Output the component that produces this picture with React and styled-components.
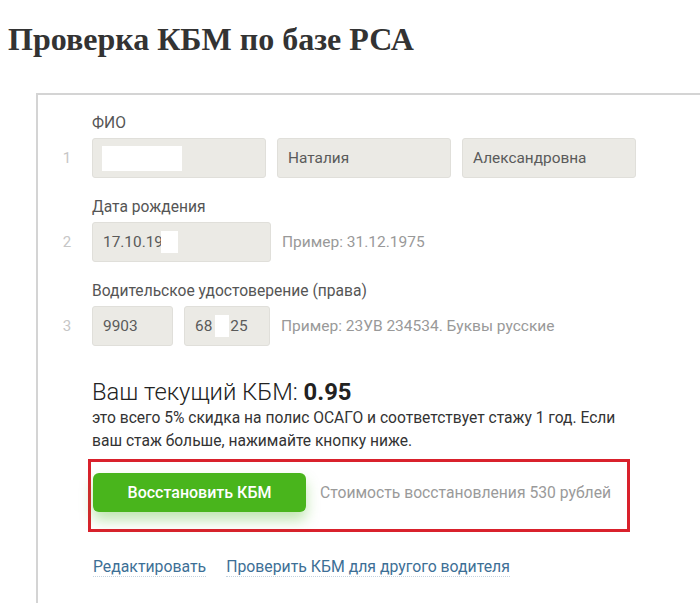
import React from 'react';
import styled, { createGlobalStyle } from 'styled-components';

const GlobalStyle = createGlobalStyle`
  html, body {
    margin: 0;
    padding: 0;
    background: #fff;
    overflow: hidden;
  }
  body {
    font-family: Roboto, "Noto Sans", sans-serif;
    color: #333;
  }
`;

const Page = styled.div`
  width: 700px;
  height: 603px;
  overflow: hidden;
`;

const Title = styled.h1`
  margin: 0;
  padding: 20px 0 0 8px;
  height: 93px;
  box-sizing: border-box;
  font-family: "Liberation Serif", "DejaVu Serif", serif;
  font-size: 32px;
  font-weight: 700;
  color: #333;
  line-height: 38px;
`;

const Card = styled.div`
  margin-left: 36px;
  width: 720px;
  height: 520px;
  border-top: 2px solid #d4d4d4;
  border-left: 2px solid #d4d4d4;
  padding: 19px 0 0 0;
  box-sizing: border-box;
`;

const Field = styled.div`
  display: grid;
  grid-template-columns: 54px 1fr;
  grid-template-rows: 18px 40px;
  row-gap: 6px;
  margin-bottom: 20px;
`;

const Label = styled.div`
  grid-column: 2;
  grid-row: 1;
  font-size: 15.6px;
  line-height: 18px;
  color: #555;
`;

const Num = styled.div`
  grid-column: 1;
  grid-row: 2;
  align-self: center;
  text-align: center;
  padding-left: 4px;
  font-size: 15px;
  color: #c6c6c6;
`;

const Inputs = styled.div`
  grid-column: 2;
  grid-row: 2;
  display: flex;
  align-items: center;
  gap: 11px;
`;

const Input = styled.div`
  width: ${p => p.$w}px;
  height: 40px;
  box-sizing: border-box;
  background: #ebeae5;
  border: 1px solid #e0dfda;
  border-radius: 3px;
  padding: 0 10px;
  display: flex;
  align-items: center;
  font-size: 15.4px;
  color: #5a5a5a;
  white-space: nowrap;
`;

const Mask = styled.span`
  display: inline-block;
  width: ${p => p.$w}px;
  height: ${p => p.$h || 24}px;
  background: #fff;
  margin-left: ${p => p.$ml || 0}px;
  margin-right: ${p => p.$mr || 0}px;
`;

const Hint = styled.div`
  font-size: 15.5px;
  color: #999;
`;

const Result = styled.div`
  margin: 32px 0 0 54px;
  width: 540px;
`;

const Kbm = styled.div`
  font-size: 23.8px;
  font-weight: 300;
  line-height: 28px;
  color: #222;
  b {
    font-weight: 700;
  }
`;

const Note = styled.p`
  margin: 1px 0 0;
  font-size: 15.6px;
  line-height: 23px;
  color: #333;
`;

const Highlight = styled.div`
  margin: 6px 0 0 -4px;
  width: 542px;
  height: 73px;
  box-sizing: border-box;
  border: 3px solid #d9212c;
  padding: 11px 0 0 2px;
  display: flex;
  align-items: flex-start;
  gap: 14px;
`;

const Button = styled.button`
  width: 213px;
  height: 39px;
  border: none;
  border-radius: 6px;
  background: #49b51c;
  color: #fff;
  font-family: Roboto, sans-serif;
  font-size: 16px;
  font-weight: 500;
  box-shadow: 0 8px 14px rgba(73, 181, 28, 0.35);
  cursor: pointer;
`;

const Price = styled.div`
  line-height: 39px;
  font-size: 15.7px;
  color: #9a9a9a;
`;

const Links = styled.div`
  margin-top: 25px;
  display: flex;
  gap: 20px;
  padding-left: 1px;
`;

const Link = styled.a`
  font-size: 15.8px;
  color: #3d6f96;
  text-decoration: none;
  border-bottom: 1px dotted #c5d3de;
  line-height: 19px;
`;

export default function App() {
  return (
    <Page>
      <GlobalStyle />
      <Title>Проверка КБМ по базе РСА</Title>
      <Card>
        <Field>
          <Label>ФИО</Label>
          <Num>1</Num>
          <Inputs>
            <Input $w={174}><Mask $w={80} $h={25} $ml={-1} /></Input>
            <Input $w={174}>Наталия</Input>
            <Input $w={174}>Александровна</Input>
          </Inputs>
        </Field>
        <Field>
          <Label>Дата рождения</Label>
          <Num>2</Num>
          <Inputs>
            <Input $w={179}>17.10.19<Mask $w={17} $h={22} $ml={-2} /></Input>
            <Hint>Пример: 31.12.1975</Hint>
          </Inputs>
        </Field>
        <Field>
          <Label>Водительское удостоверение (права)</Label>
          <Num>3</Num>
          <Inputs>
            <Input $w={81}>9903</Input>
            <Input $w={86}>68<Mask $w={14} $h={22} $ml={3} $mr={1} />25</Input>
            <Hint>Пример: 23УВ 234534. Буквы русские</Hint>
          </Inputs>
        </Field>
        <Result>
          <Kbm>Ваш текущий КБМ: <b>0.95</b></Kbm>
          <Note>
            это всего 5% скидка на полис ОСАГО и соответствует стажу 1 год. Если
            ваш стаж больше, нажимайте кнопку ниже.
          </Note>
          <Highlight>
            <Button>Восстановить КБМ</Button>
            <Price>Стоимость восстановления 530 рублей</Price>
          </Highlight>
          <Links>
            <Link href="#">Редактировать</Link>
            <Link href="#">Проверить КБМ для другого водителя</Link>
          </Links>
        </Result>
      </Card>
    </Page>
  );
}
